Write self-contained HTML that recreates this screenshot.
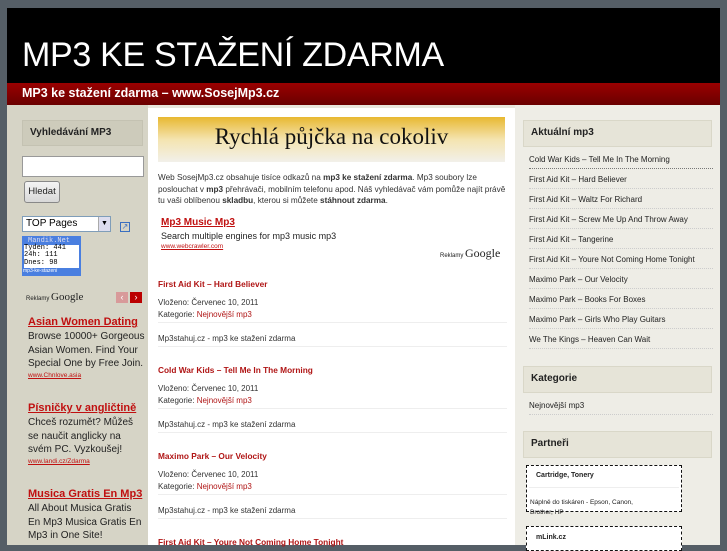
<!DOCTYPE html>
<html><head><meta charset="utf-8"><style>
*{margin:0;padding:0;box-sizing:border-box}
body{width:727px;height:545px;overflow:hidden;background:#555e66;font-family:"Liberation Sans",sans-serif;position:relative}
.a{position:absolute}
#hdr{left:7px;top:8px;width:713px;height:75px;background:#000}
#hdr h1{position:absolute;left:15px;top:28px;color:#fff;font-weight:normal;font-size:34px;letter-spacing:-0.3px}
#bar{left:7px;top:83px;width:713px;height:22px;background:linear-gradient(#9a0000,#6a0000)}
#bar span{position:absolute;left:15px;top:3px;color:#fff;font-weight:bold;font-size:12.5px}
#ls{left:7px;top:105px;width:141px;height:440px;background:#d6d4c6}
#mn{left:148px;top:105px;width:367px;height:440px;background:#fff}
#rs{left:515px;top:105px;width:205px;height:440px;background:#eeede6}
.hb{position:absolute;border:1px solid #d9d7c8;font-weight:bold;font-size:10px;color:#222;padding-left:7px;line-height:24px}
.ri{position:absolute;left:529px;font-size:8px;color:#222;width:184px;border-bottom:1px dotted #ccc;height:14px}
.pt{position:absolute;left:158px;font-size:8.3px;font-weight:bold;color:#b01515}
.pm{position:absolute;left:158px;font-size:8px;color:#333;line-height:12px}
.pm a{color:#b01515;text-decoration:none}
.hr{position:absolute;left:158px;width:349px;height:1px;background:#eee}
.at{position:absolute;left:28px;font-size:11px;font-weight:bold;color:#c01010;text-decoration:underline}
.ad{position:absolute;left:28px;font-size:10px;color:#222;line-height:13.5px;width:118px}
.au{position:absolute;left:28px;font-size:6.5px;color:#c01010;text-decoration:underline}
</style></head><body>
<div id="hdr" class="a"><h1>MP3 KE STAŽENÍ ZDARMA</h1></div>
<div id="bar" class="a"><span>MP3 ke stažení zdarma – www.SosejMp3.cz</span></div>
<div id="ls" class="a"></div>
<div id="mn" class="a"></div>
<div id="rs" class="a"></div>

<div class="hb" style="left:22px;top:120px;width:121px;height:26px;background:#cdcbbb;border-color:#c4c2b2">Vyhledávání MP3</div>
<div class="a" style="left:22px;top:156px;width:122px;height:21px;background:#fff;border:1px solid #999"></div>
<div class="a" style="left:24px;top:181px;width:36px;height:22px;background:linear-gradient(#f4f4f4,#d8d8d8);border:1px solid #888;border-radius:3px;font-size:9.5px;line-height:20px;text-align:center;color:#222">Hledat</div>
<div class="a" style="left:22px;top:216px;width:89px;height:16px;background:#fff;border:1px solid #7f9db9;font-size:10px;line-height:14px;padding-left:3px">TOP Pages</div>
<div class="a" style="left:98px;top:217px;width:12px;height:14px;background:#dde;border-left:1px solid #aaa;font-size:7px;text-align:center;line-height:14px">▼</div>
<div class="a" style="left:120px;top:222px;width:10px;height:10px;border:1px solid #3a6fc0;color:#3a6fc0;font-size:8px;line-height:8px;text-align:center">↗</div>
<div class="a" style="left:22px;top:236px;width:59px;height:40px;background:#4a7fe0;"></div>
<div class="a" style="left:24px;top:245px;width:55px;height:23px;background:#fff;font-family:'Liberation Mono',monospace;font-size:7px;line-height:7.3px;color:#000">Tyden: 441<br>24h: 111<br>Dnes: 98</div>
<div class="a" style="left:28px;top:237px;font-family:'Liberation Mono',monospace;font-size:7px;color:#dde">Mandik.Net</div>
<div class="a" style="left:23px;top:268px;font-size:5px;color:#fff">mp3-ke-stazeni</div>
<div class="a" style="left:26px;top:291px;font-size:6px;color:#222">Reklamy <span style="font-family:'Liberation Serif',serif;font-size:11px">Google</span></div>
<div class="a" style="left:116px;top:292px;width:12px;height:11px;background:#d89a9a;color:#fff;font-size:9px;line-height:11px;text-align:center">‹</div>
<div class="a" style="left:130px;top:292px;width:12px;height:11px;background:#b00;color:#fff;font-size:9px;line-height:11px;text-align:center">›</div>
<div class="at" style="top:316px">Asian Women Dating</div>
<div class="ad" style="top:330px">Browse 10000+ Gorgeous Asian Women. Find Your Special One by Free Join.</div>
<div class="au" style="top:372px">www.Chnlove.asia</div>
<div class="at" style="top:402px">Písničky v angličtině</div>
<div class="ad" style="top:416px">Chceš rozumět? Můžeš se naučit anglicky na svém PC. Vyzkoušej!</div>
<div class="au" style="top:458px">www.landi.cz/Zdarma</div>
<div class="at" style="top:488px">Musica Gratis En Mp3</div>
<div class="ad" style="top:502px">All About Musica Gratis En Mp3 Musica Gratis En Mp3 in One Site!</div>

<div class="a" style="left:148px;top:105px;width:367px;height:3px;background:#e8e6dc"></div>
<div class="a" style="left:158px;top:117px;width:347px;height:45px;background:linear-gradient(#e8b830,#f4e4b0 50%,#f2f0ea);font-family:'Liberation Serif',serif;font-size:23px;text-align:center;line-height:30px;color:#111;padding-top:5px">Rychlá půjčka na cokoliv</div>
<div class="pm" style="top:172px;width:352px;line-height:11.5px;font-size:8.2px">Web SosejMp3.cz obsahuje tisíce odkazů na <b>mp3 ke stažení zdarma</b>. Mp3 soubory lze poslouchat v <b>mp3</b> přehrávači, mobilním telefonu apod. Náš vyhledávač vám pomůže najít právě tu vaši oblíbenou <b>skladbu</b>, kterou si můžete <b>stáhnout zdarma</b>.</div>
<div class="a" style="left:161px;top:217px;font-size:10px;font-weight:bold;color:#c01010;text-decoration:underline">Mp3 Music Mp3</div>
<div class="a" style="left:161px;top:231px;font-size:9px;color:#222">Search multiple engines for mp3 music mp3</div>
<div class="a" style="left:161px;top:243px;font-size:6.5px;color:#c01010;text-decoration:underline">www.webcrawler.com</div>
<div class="a" style="left:440px;top:246px;font-size:6px;color:#222">Reklamy <span style="font-family:'Liberation Serif',serif;font-size:12px">Google</span></div>

<div class="pt" style="top:279px">First Aid Kit – Hard Believer</div>
<div class="pm" style="top:297px">Vloženo: Červenec 10, 2011<br>Kategorie: <a>Nejnovější mp3</a></div>
<div class="hr" style="top:322px"></div>
<div class="pm" style="top:333px">Mp3stahuj.cz - mp3 ke stažení zdarma</div>
<div class="hr" style="top:346px"></div>
<div class="pt" style="top:365px">Cold War Kids – Tell Me In The Morning</div>
<div class="pm" style="top:383px">Vloženo: Červenec 10, 2011<br>Kategorie: <a>Nejnovější mp3</a></div>
<div class="hr" style="top:408px"></div>
<div class="pm" style="top:419px">Mp3stahuj.cz - mp3 ke stažení zdarma</div>
<div class="hr" style="top:432px"></div>
<div class="pt" style="top:451px">Maximo Park – Our Velocity</div>
<div class="pm" style="top:469px">Vloženo: Červenec 10, 2011<br>Kategorie: <a>Nejnovější mp3</a></div>
<div class="hr" style="top:494px"></div>
<div class="pm" style="top:505px">Mp3stahuj.cz - mp3 ke stažení zdarma</div>
<div class="hr" style="top:518px"></div>
<div class="pt" style="top:537px">First Aid Kit – Youre Not Coming Home Tonight</div>

<div class="hb" style="left:523px;top:120px;width:189px;height:27px;background:#e6e4d8">Aktuální mp3</div>
<div class="ri" style="top:155px;border-bottom:1px dotted #777">Cold War Kids – Tell Me In The Morning</div>
<div class="ri" style="top:175px">First Aid Kit – Hard Believer</div>
<div class="ri" style="top:195px">First Aid Kit – Waltz For Richard</div>
<div class="ri" style="top:215px">First Aid Kit – Screw Me Up And Throw Away</div>
<div class="ri" style="top:235px">First Aid Kit – Tangerine</div>
<div class="ri" style="top:255px">First Aid Kit – Youre Not Coming Home Tonight</div>
<div class="ri" style="top:275px">Maximo Park – Our Velocity</div>
<div class="ri" style="top:295px">Maximo Park – Books For Boxes</div>
<div class="ri" style="top:315px">Maximo Park – Girls Who Play Guitars</div>
<div class="ri" style="top:335px">We The Kings – Heaven Can Wait</div>
<div class="hb" style="left:523px;top:366px;width:189px;height:27px;background:#e6e4d8">Kategorie</div>
<div class="ri" style="top:401px">Nejnovější mp3</div>
<div class="hb" style="left:523px;top:431px;width:189px;height:27px;background:#e6e4d8">Partneři</div>
<div class="a" style="left:526px;top:465px;width:156px;height:47px;background:#fff;border:1px dashed #111"></div>
<div class="a" style="left:536px;top:472px;font-size:7px;font-weight:bold;color:#222">Cartridge, Tonery</div>
<div class="a" style="left:529px;top:487px;width:150px;height:1px;background:#eee"></div>
<div class="a" style="left:530px;top:498px;font-size:6.5px;color:#222;line-height:10px;width:120px">Náplně do tiskáren - Epson, Canon, Brother, HP</div>
<div class="a" style="left:526px;top:526px;width:156px;height:25px;background:#fff;border:1px dashed #111"></div>
<div class="a" style="left:536px;top:534px;font-size:7px;font-weight:bold;color:#222">mLink.cz</div>
</body></html>
